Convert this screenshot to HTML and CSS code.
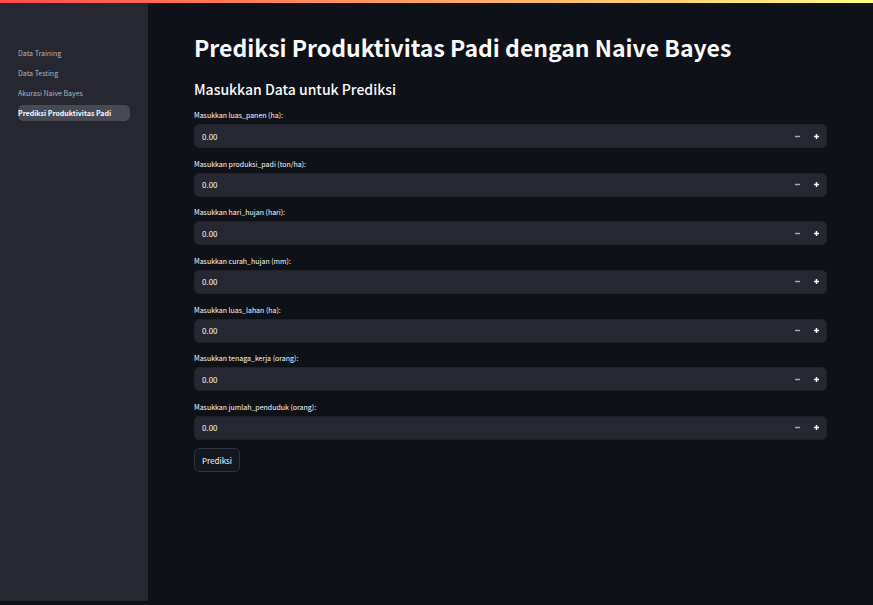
FILE: index.html
```html
<!DOCTYPE html>
<html lang="id">
<head>
<meta charset="utf-8">
<title>Prediksi Produktivitas Padi</title>
<link rel="stylesheet" href="styles.css">
</head>
<body>
<div class="topbar"></div>
<div class="app">
  <nav class="sidebar">
    <a class="nav-link" href="#">Data Training</a>
    <a class="nav-link" href="#">Data Testing</a>
    <a class="nav-link" href="#">Akurasi Naive Bayes</a>
    <a class="nav-link active" href="#" aria-current="page">Prediksi Produktivitas Padi</a>
  </nav>
  <main class="main">
    <h1>Prediksi Produktivitas Padi dengan Naive Bayes</h1>
    <h2>Masukkan Data untuk Prediksi</h2>
    <form>
      <div class="fields">
        <div class="field">
          <label for="f1">Masukkan luas_panen (ha):</label>
          <div class="box"><input id="f1" type="text" inputmode="decimal" value="0.00"><button class="step minus" type="button" aria-label="Kurangi"><svg viewBox="0 0 9 9"><path d="M2 4.5h5"/></svg></button><button class="step" type="button" aria-label="Tambah"><svg viewBox="0 0 9 9"><path d="M2 4.5h5M4.5 2v5"/></svg></button></div>
        </div>
        <div class="field">
          <label for="f2">Masukkan produksi_padi (ton/ha):</label>
          <div class="box"><input id="f2" type="text" inputmode="decimal" value="0.00"><button class="step minus" type="button" aria-label="Kurangi"><svg viewBox="0 0 9 9"><path d="M2 4.5h5"/></svg></button><button class="step" type="button" aria-label="Tambah"><svg viewBox="0 0 9 9"><path d="M2 4.5h5M4.5 2v5"/></svg></button></div>
        </div>
        <div class="field">
          <label for="f3">Masukkan hari_hujan (hari):</label>
          <div class="box"><input id="f3" type="text" inputmode="decimal" value="0.00"><button class="step minus" type="button" aria-label="Kurangi"><svg viewBox="0 0 9 9"><path d="M2 4.5h5"/></svg></button><button class="step" type="button" aria-label="Tambah"><svg viewBox="0 0 9 9"><path d="M2 4.5h5M4.5 2v5"/></svg></button></div>
        </div>
        <div class="field">
          <label for="f4">Masukkan curah_hujan (mm):</label>
          <div class="box"><input id="f4" type="text" inputmode="decimal" value="0.00"><button class="step minus" type="button" aria-label="Kurangi"><svg viewBox="0 0 9 9"><path d="M2 4.5h5"/></svg></button><button class="step" type="button" aria-label="Tambah"><svg viewBox="0 0 9 9"><path d="M2 4.5h5M4.5 2v5"/></svg></button></div>
        </div>
        <div class="field">
          <label for="f5">Masukkan luas_lahan (ha):</label>
          <div class="box"><input id="f5" type="text" inputmode="decimal" value="0.00"><button class="step minus" type="button" aria-label="Kurangi"><svg viewBox="0 0 9 9"><path d="M2 4.5h5"/></svg></button><button class="step" type="button" aria-label="Tambah"><svg viewBox="0 0 9 9"><path d="M2 4.5h5M4.5 2v5"/></svg></button></div>
        </div>
        <div class="field">
          <label for="f6">Masukkan tenaga_kerja (orang):</label>
          <div class="box"><input id="f6" type="text" inputmode="decimal" value="0.00"><button class="step minus" type="button" aria-label="Kurangi"><svg viewBox="0 0 9 9"><path d="M2 4.5h5"/></svg></button><button class="step" type="button" aria-label="Tambah"><svg viewBox="0 0 9 9"><path d="M2 4.5h5M4.5 2v5"/></svg></button></div>
        </div>
        <div class="field">
          <label for="f7">Masukkan jumlah_penduduk (orang):</label>
          <div class="box"><input id="f7" type="text" inputmode="decimal" value="0.00"><button class="step minus" type="button" aria-label="Kurangi"><svg viewBox="0 0 9 9"><path d="M2 4.5h5"/></svg></button><button class="step" type="button" aria-label="Tambah"><svg viewBox="0 0 9 9"><path d="M2 4.5h5M4.5 2v5"/></svg></button></div>
        </div>
      </div>
      <button class="submit" type="button">Prediksi</button>
    </form>
  </main>
</div>
</body>
</html>
```
FILE: styles.css
```css
* { box-sizing: border-box; }
body {
  margin: 0;
  min-height: 100vh;
  display: flex;
  flex-direction: column;
  padding-bottom: 4px;
  background: #0e1117;
  color: #fafafa;
  font-family: "Source Sans Pro", "Noto Sans CJK SC", sans-serif;
}
.topbar {
  height: 3px;
  background: linear-gradient(90deg, #ff4b4b, #fffd80);
}
.app { flex: 1; display: flex; }
.sidebar {
  width: 148px;
  flex: none;
  padding: 42px 18px 0;
  background: #262730;
  display: flex;
  flex-direction: column;
  gap: 4px;
}
.nav-link {
  height: 16px;
  line-height: 16px;
  border-radius: 5px;
  color: #b5b6ba;
  font-size: 7px;
  text-decoration: none;
  white-space: nowrap;
}
.nav-link.active {
  background: #474953;
  color: #fafafa;
  font-weight: 700;
}
.main { flex: 1; padding: 28px 46px 0; }
h1 { margin: 0; font-size: 23px; line-height: 32px; font-weight: 700; }
h2 { margin: 16px 0 10px; font-size: 14px; line-height: 20px; font-weight: 500; }
.fields {
  display: flex;
  flex-direction: column;
  justify-content: space-between;
  min-height: 331px;
}
label { display: block; font-size: 7px; line-height: 12px; margin-bottom: 3px; }
.box {
  display: flex;
  height: 24px;
  border: 1px solid #20222a;
  border-radius: 5px;
  background: #262730;
}
.box input {
  flex: 1;
  min-width: 0;
  padding: 0 7px;
  border: 0;
  background: none;
  color: #fafafa;
  font: inherit;
  font-size: 8px;
}
.step {
  width: 19px;
  padding: 0;
  border: 0;
  background: none;
  color: #fafafa;
  display: grid;
  place-items: center;
}
.minus { color: #a3a4ab; }
.step svg { width: 9px; height: 9px; fill: none; stroke: currentColor; stroke-width: 1.5; }
.submit {
  height: 24px;
  margin-top: 8px;
  padding: 0 7px;
  border: 1px solid #31333c;
  border-radius: 5px;
  background: #131720;
  color: #fafafa;
  font: inherit;
  font-size: 8px;
}
```
